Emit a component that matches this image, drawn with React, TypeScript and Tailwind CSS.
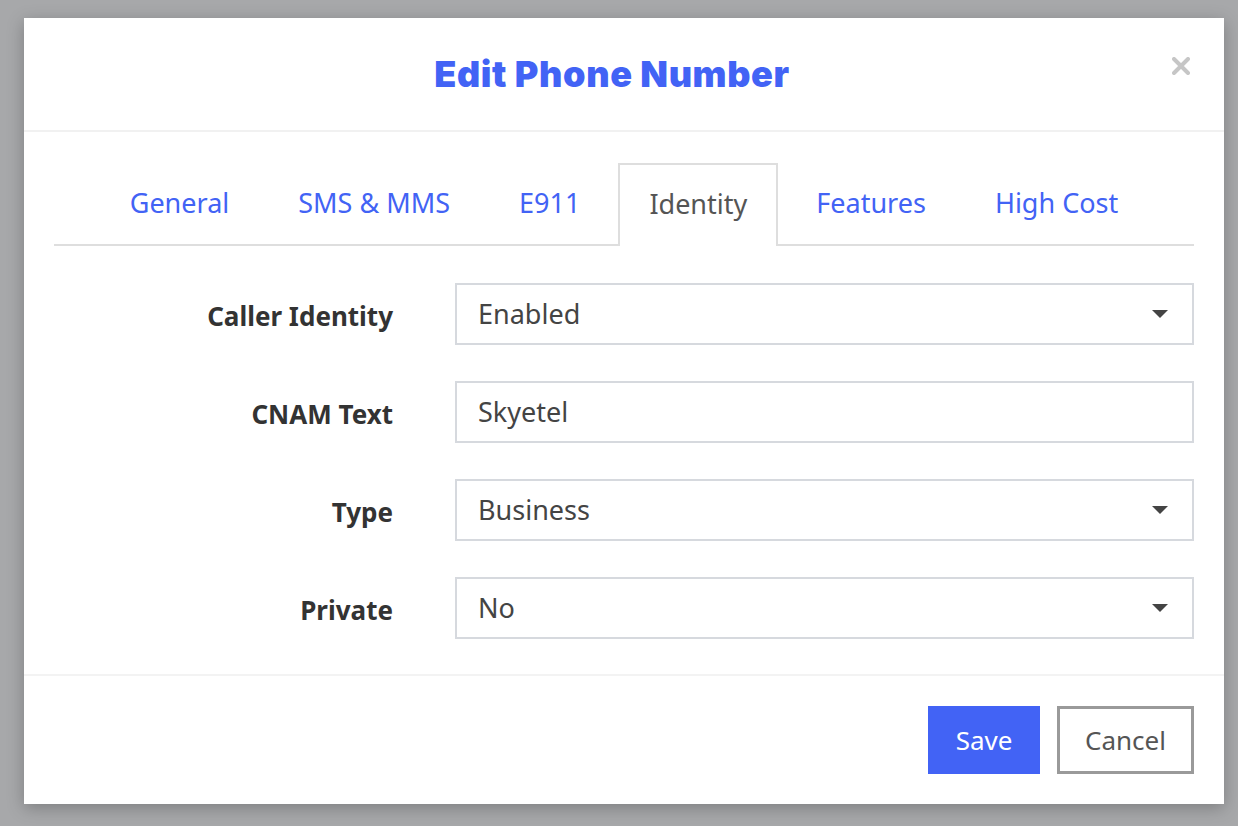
import { useState } from "react";

const tabs = ["General", "SMS & MMS", "E911", "Identity", "Features", "High Cost"];

function Caret() {
    return (
        <svg width="16" height="8" viewBox="0 0 16 8" className="absolute right-[24px] top-1/2 -translate-y-1/2">
            <path d="M0 0 L16 0 L8 8 Z" fill="#444" />
        </svg>
    );
}

function Field({ label, value, select }: { label: string; value: string; select?: boolean }) {
    return (
        <div className="flex items-center gap-[62px]">
            <label className="w-[339px] text-right font-bold text-[26px] text-[#333] translate-y-[2px]">{label}</label>
            <div className="relative flex-1 h-[62px] border-2 border-[#d6d9de] flex items-center pl-[21px] text-[27px] text-[#444]">
                {value}
                {select && <Caret />}
            </div>
        </div>
    );
}

export default function App() {
    const [active, setActive] = useState("Identity");

    return (
        <div className="min-h-screen bg-[#a7a8aa] px-6 pt-[18px] font-['Noto_Sans',sans-serif]">
            <div className="w-[1200px] bg-white shadow-[0_4px_16px_rgba(0,0,0,0.25)]">
                <div className="relative h-[114px] border-b-2 border-[#f1f1f1] flex items-center justify-center pr-[24px]">
                    <h1 className="font-['Inter',sans-serif] font-black text-[36px] tracking-[0.6px] text-[#4263f5]">Edit Phone Number</h1>
                    <button className="absolute right-[34px] top-[39px]">
                        <svg width="18" height="18" viewBox="0 0 18 18">
                            <path d="M2 2 L16 16 M16 2 L2 16" stroke="#c6c6c6" strokeWidth="4" strokeLinecap="round" />
                        </svg>
                    </button>
                </div>

                <div className="px-[30px] pt-[31px] pb-[35px]">
                    <div className="flex justify-center gap-[7px] border-b-2 border-[#dedede]">
                        {tabs.map((t) => (
                            <button
                                key={t}
                                onClick={() => setActive(t)}
                                className={
                                    t === active
                                        ? "h-[83px] -mb-[2px] pb-[2px] px-[29px] border-2 border-b-0 border-[#dedede] bg-white text-[27px] text-[#555]"
                                        : "h-[81px] px-[31px] text-[27px] text-[#4263f5]"
                                }
                            >
                                {t}
                            </button>
                        ))}
                    </div>

                    <div className="mt-[37px] flex flex-col gap-[36px]">
                        <Field label="Caller Identity" value="Enabled" select />
                        <Field label="CNAM Text" value="Skyetel" />
                        <Field label="Type" value="Business" select />
                        <Field label="Private" value="No" select />
                    </div>
                </div>

                <div className="border-t-2 border-[#f3f3f3] px-[30px] py-[30px] flex justify-end gap-[17px]">
                    <button className="h-[68px] w-[112px] bg-[#4263f5] text-white text-[26px]">Save</button>
                    <button className="h-[68px] w-[137px] border-[3px] border-[#9a9a9a] text-[#555] text-[26px]">Cancel</button>
                </div>
            </div>
        </div>
    );
}
